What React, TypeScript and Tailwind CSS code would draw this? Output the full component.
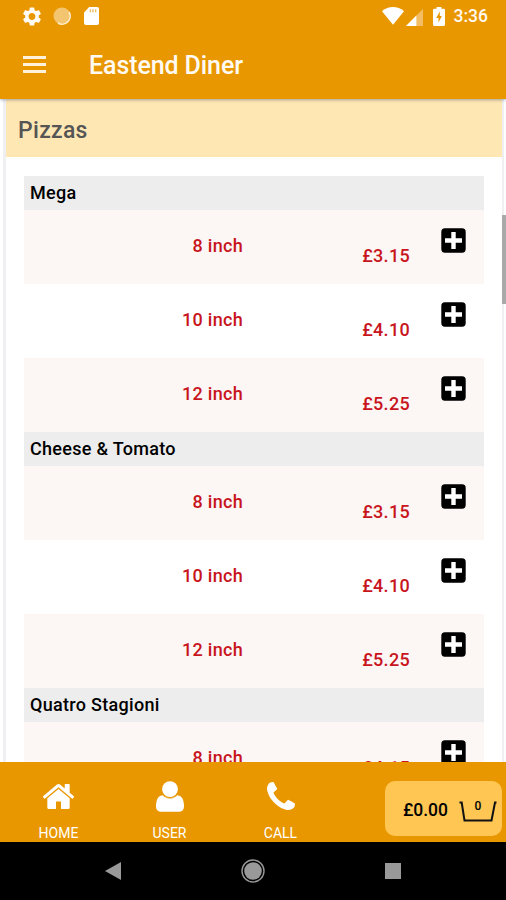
import React from 'react';

type Size = { label: string; price: string };

const sizes: Size[] = [
  { label: '8 inch', price: '£3.15' },
  { label: '10 inch', price: '£4.10' },
  { label: '12 inch', price: '£5.25' },
];

const pizzas = [
  { name: 'Mega', sizes },
  { name: 'Cheese & Tomato', sizes },
  { name: 'Quatro Stagioni', sizes: [{ label: '8 inch', price: '£4.15' }] },
];

const PlusSquare = () => (
  <svg viewBox="0 0 25 25" className="h-[25px] w-[25px]">
    <rect x="0.3" y="0.3" width="24.4" height="24.4" rx="3.6" fill="#000" />
    <path d="M12.5 4v17M4 12.5h17" stroke="#fff" strokeWidth="4.4" />
  </svg>
);

const HomeIcon = () => (
  <svg viewBox="97 253 1598 1283" className="h-[25px] w-[31px]" fill="currentColor">
    <path d="M1472 992v480q0 26-19 45t-45 19h-384v-384h-256v384h-384q-26 0-45-19t-19-45v-480q0-1 .5-3t.5-3l575-474 575 474q1 2 1 6zm223-69l-62 74q-8 9-21 11h-3q-13 0-21-7l-692-577-692 577q-12 8-24 7-13-2-21-11l-62-74q-8-10-7-23.5t11-21.5l719-599q32-26 76-26t76 26l244 204v-195q0-14 9-23t23-9h192q14 0 23 9t9 23v408l219 182q10 8 11 21.5t-7 23.5z" />
  </svg>
);

const UserIcon = () => (
  <svg viewBox="0 -1408 1408 1536" className="h-[31px] w-[28px]" fill="currentColor">
    <path
      transform="scale(1 -1)"
      d="M1408 131q0-120-73-189.5t-194-69.5h-874q-121 0-194 69.5t-73 189.5q0 53 3.5 103.5t14 109 26.5 108.5 43 97.5 62 81 85.5 53.5 111.5 20q9 0 42-21.5t74.5-48 108-48 133.5-21.5 133.5 21.5 108 48 74.5 48 42 21.5q61 0 111.5-20t85.5-53.5 62-81 43-97.5 26.5-108.5 14-109 3.5-103.5z"
    />
    <circle cx="704" cy="-1010" r="398" />
    <path d="M360 -688q150 135 344 135t344-135" fill="none" stroke="#e99700" strokeWidth="40" />
  </svg>
);

const PhoneIcon = () => (
  <svg viewBox="192 128 1408 1408" className="h-[28px] w-[28px]" fill="currentColor">
    <path d="M1600 1240q0 27-10 70.5t-21 68.5q-21 50-122 106-94 51-186 51-27 0-52.5-3.5t-57.5-12.5-47.5-14.5-55.5-20.5-49-18q-98-35-175-83-128-79-264.5-215.5t-215.5-264.5q-48-77-83-175-3-9-18-49t-20.5-55.5-14.5-47.5-12.5-57.5-3.5-52.5q0-92 51-186 56-101 106-122 25-11 68.5-21t70.5-10q14 0 21 3 18 6 53 76 11 19 30 54t35 63.5 31 53.5q3 4 17.5 25t21.5 35.5 7 28.5q0 20-28.5 50t-62 55-62 53-28.5 46q0 9 5 22.5t8.5 20.5 14 24 11.5 19q76 137 174 235t235 174q2 1 19 11.5t24 14 20.5 8.5 22.5 5q18 0 46-28.5t53-62 55-62 50-28.5q14 0 28.5 7t35.5 21.5 25 17.5q25 15 53.5 31t63.5 35 54 30q70 35 76 53 3 7 3 21z" />
  </svg>
);

const StatusBar = () => (
  <div className="flex h-8 items-center pr-[18px] pl-[22px] text-[#fffaf2]">
    <svg viewBox="2 2 20 20" className="h-[19px] w-[20px]" fill="currentColor">
      <path d="M19.14 12.94c.04-.3.06-.61.06-.94 0-.32-.02-.64-.07-.94l2.03-1.58c.18-.14.23-.41.12-.61l-1.92-3.32c-.12-.22-.37-.29-.59-.22l-2.39.96c-.5-.38-1.03-.7-1.62-.94l-.36-2.54c-.04-.24-.24-.41-.48-.41h-3.84c-.24 0-.43.17-.47.41l-.36 2.54c-.59.24-1.13.57-1.62.94l-2.39-.96c-.22-.08-.47 0-.59.22L2.74 8.87c-.12.21-.08.47.12.61l2.03 1.58c-.05.3-.09.63-.09.94s.02.64.07.94l-2.03 1.58c-.18.14-.23.41-.12.61l1.92 3.32c.12.22.37.29.59.22l2.39-.96c.5.38 1.03.7 1.62.94l.36 2.54c.05.24.24.41.48.41h3.84c.24 0 .44-.17.47-.41l.36-2.54c.59-.24 1.13-.56 1.62-.94l2.39.96c.22.08.47 0 .59-.22l1.92-3.32c.12-.22.07-.47-.12-.61l-2.01-1.58zM12 15.6c-1.98 0-3.6-1.62-3.6-3.6s1.62-3.6 3.6-3.6 3.6 1.62 3.6 3.6-1.62 3.6-3.6 3.6z" />
    </svg>
    <svg viewBox="0 0 18 18" className="ml-[11px] h-[18px] w-[18px]">
      <circle cx="9" cy="9" r="8.5" fill="#f3c571" />
      <path d="M16 5a8 8 0 0 1-11 11" fill="none" stroke="#ffedcc" strokeWidth="1.5" />
    </svg>
    <svg viewBox="0 0 15 18" className="ml-[13px] h-[18px] w-[15px]">
      <path d="M5.2 0H13a2 2 0 0 1 2 2v14a2 2 0 0 1-2 2H2a2 2 0 0 1-2-2V5.4z" fill="#fff" />
      <path d="M6.4 2.2v3M9 2.2v3M11.7 2.2v3" stroke="#f0bd62" strokeWidth="1.4" />
    </svg>
    <svg viewBox="0 0 22 18" className="ml-auto h-[18px] w-[22px]">
      <path d="M11 17.8 0 4.2Q5 0 11 0t11 4.2z" fill="#fff" />
    </svg>
    <svg viewBox="0 0 18 18" className="mt-[2px] ml-[2px] h-[17px] w-[17px]">
      <path d="M18 0v18H0z" fill="#f3bd64" />
      <path d="M11 7v11H0z" fill="#fff" />
    </svg>
    <svg viewBox="0 0 12 19" className="ml-[10px] h-[19px] w-[12px]">
      <path d="M3.6 0h4.8v1.8H10.6A1.4 1.4 0 0 1 12 3.2v14.2A1.5 1.5 0 0 1 10.5 19h-9A1.5 1.5 0 0 1 0 17.4V3.2a1.4 1.4 0 0 1 1.4-1.4H3.6z" fill="#fff" />
      <path d="M6.8 4.6 3.2 11h2.3v4.4L8.9 9H6.8z" fill="#e99700" />
    </svg>
    <span className="ml-[9px] text-[17.5px] leading-8 font-medium">3:36</span>
  </div>
);

const SizeRow = ({ label, price }: Size) => (
  <div className="flex h-[74px] text-[18px] leading-6 font-medium tracking-[0.3px] text-[#c8141c] odd:bg-white even:bg-[#fcf6f5]">
    <span className="w-[219px] pt-6 text-right">{label}</span>
    <span className="w-[167px] pt-[34px] text-right">{price}</span>
    <button className="ml-[31px] h-[25px] pt-[18px]">
      <PlusSquare />
    </button>
  </div>
);

const TabItem = ({ icon, label }: { icon: React.ReactNode; label: string }) => (
  <div className="flex w-[111px] flex-col items-center">
    <div className="flex h-[62px] items-center pt-[6px]">{icon}</div>
    <span className="text-[14px] leading-[18px]">{label}</span>
  </div>
);

export default function App() {
  return (
    <div className="flex h-[900px] w-[506px] flex-col overflow-hidden bg-white font-['Roboto',sans-serif]">
      <header className="z-10 h-[99px] shrink-0 bg-[#e99700] shadow-[0_1px_3px_rgba(60,80,120,0.45)]">
        <StatusBar />
        <div className="flex h-[66px] items-center pl-[23px] text-[#fffaf2]">
          <div className="-mt-[2px] flex w-[23px] flex-col gap-[4px]">
            <div className="h-[3px] bg-[#fff1dc]" />
            <div className="h-[3px] bg-[#fff1dc]" />
            <div className="h-[3px] bg-[#fff1dc]" />
          </div>
          <h1 className="mt-[2px] ml-[43px] text-[25px] font-medium tracking-[-0.1px]">Eastend Diner</h1>
        </div>
      </header>

      <main className="relative h-[663px] shrink-0 overflow-hidden pr-[2px] pl-[3px]">
        <div className="border-r-2 border-l-3 border-[#f0f0f2]">
          <h2 className="h-[58px] bg-[#fee7b3] pl-[12px] text-[23px] leading-[63px] font-medium tracking-[0.3px] text-[#555]">Pizzas</h2>
          <div className="pt-[19px] pr-[18px] pl-[18px]">
            {pizzas.map((pizza) => (
              <section key={pizza.name}>
                <h3 className="h-[34px] bg-[#ededed] pl-[6px] text-[18px] leading-[34px] font-medium tracking-[0.3px] text-black">{pizza.name}</h3>
                {pizza.sizes.map((size) => (
                  <SizeRow key={size.label} {...size} />
                ))}
              </section>
            ))}
          </div>
        </div>
        <div className="absolute top-[116px] right-0 h-[89px] w-[4px] bg-[#a9a9a9]" />
      </main>

      <footer className="flex h-[80px] shrink-0 bg-[#e99700] pl-[3px] text-white">
        <TabItem icon={<HomeIcon />} label="HOME" />
        <TabItem icon={<UserIcon />} label="USER" />
        <TabItem icon={<PhoneIcon />} label="CALL" />
        <div className="mt-[19px] ml-[49px] flex h-[55px] w-[117px] items-center rounded-[10px] bg-[#ffc654] pl-[18px] text-black">
          <span className="pt-[3px] text-[17.5px] font-medium">£0.00</span>
          <div className="relative mt-[5px] ml-[11px] h-[21px] w-[38px]">
            <svg viewBox="0 0 38 21" className="h-[21px] w-[38px]" fill="none" stroke="#111" strokeWidth="2">
              <path d="M0.5 1.5h2.2L5.5 19.5h27L36 1.5h1.5" />
            </svg>
            <span className="absolute -top-[1px] left-0 w-full text-center text-[12px] leading-3 font-medium">0</span>
          </div>
        </div>
      </footer>

      <nav className="flex h-[58px] shrink-0 items-center bg-black pl-[105px]">
        <svg viewBox="0 0 16 18" className="h-[18px] w-[16px]">
          <path d="M16 0v18L0 9z" fill="#999" />
        </svg>
        <svg viewBox="0 0 24 24" className="ml-[120px] h-[24px] w-[24px]">
          <circle cx="12" cy="12" r="11" fill="none" stroke="#999" strokeWidth="1.4" />
          <circle cx="12" cy="12" r="8.8" fill="#999" />
        </svg>
        <div className="ml-[120px] h-4 w-4 bg-[#999]" />
      </nav>
    </div>
  );
}
